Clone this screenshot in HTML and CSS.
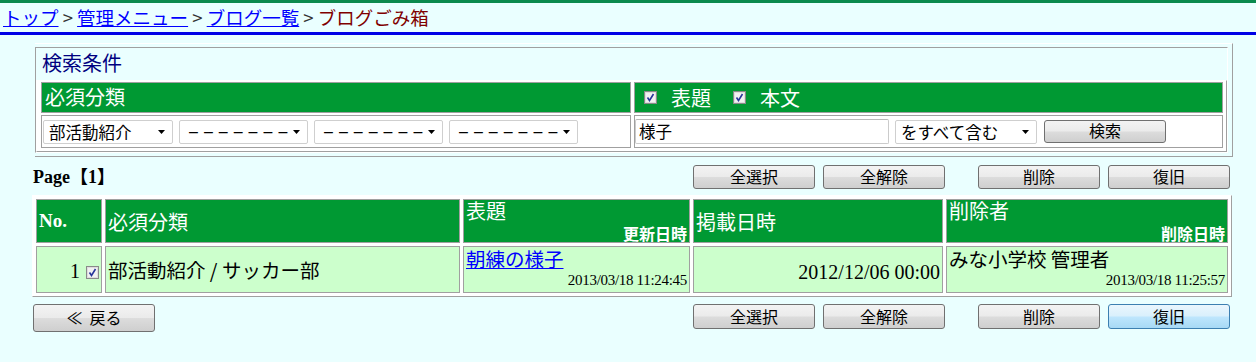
FILE: index.html
```html
<!DOCTYPE html>
<html lang="ja">
<head>
<meta charset="utf-8">
<title>ブログごみ箱</title>
<link rel="stylesheet" href="styles.css">
</head>
<body>
<div class="crumb"><a class="lnk" href="#">トップ</a><span class="sep"> &gt; </span><a class="lnk" href="#">管理メニュー</a><span class="sep"> &gt; </span><a class="lnk" href="#">ブログ一覧</a><span class="sep"> &gt; </span><span class="cur">ブログごみ箱</span></div>

<div class="search">
  <div class="search-cell">
    <div class="search-title">検索条件</div>
    <div class="search-grid">
      <div class="sg-head">必須分類</div>
      <div class="sg-head sg-checks">
        <span class="cb"><svg width="13" height="13" viewBox="0 0 13 13"><rect x="0.5" y="0.5" width="12" height="12" fill="#dedede" stroke="#8a8a8a"/><rect x="2" y="2" width="9" height="9" fill="#f2f2f2"/><path d="M3.5 6.5 L5.5 9.5 L9.5 3" fill="none" stroke="#27359a" stroke-width="1.6"/></svg></span>
        <span class="chk-label">表題</span>
        <span class="cb cb-second"><svg width="13" height="13" viewBox="0 0 13 13"><rect x="0.5" y="0.5" width="12" height="12" fill="#dedede" stroke="#8a8a8a"/><rect x="2" y="2" width="9" height="9" fill="#f2f2f2"/><path d="M3.5 6.5 L5.5 9.5 L9.5 3" fill="none" stroke="#27359a" stroke-width="1.6"/></svg></span>
        <span class="chk-label">本文</span>
      </div>
      <div class="sg-body sg-selects">
        <div class="sel sel-cat"><span class="sel-text">部活動紹介</span><svg class="arrow" width="7" height="4" viewBox="0 0 7 4"><path d="M0 0 H7 L3.5 4 Z" fill="#000"/></svg></div>
        <div class="sel sel-cat2"><span class="sel-text dash">–––––––</span><svg class="arrow" width="7" height="4" viewBox="0 0 7 4"><path d="M0 0 H7 L3.5 4 Z" fill="#000"/></svg></div>
        <div class="sel sel-cat2"><span class="sel-text dash">–––––––</span><svg class="arrow" width="7" height="4" viewBox="0 0 7 4"><path d="M0 0 H7 L3.5 4 Z" fill="#000"/></svg></div>
        <div class="sel sel-cat2"><span class="sel-text dash">–––––––</span><svg class="arrow" width="7" height="4" viewBox="0 0 7 4"><path d="M0 0 H7 L3.5 4 Z" fill="#000"/></svg></div>
      </div>
      <div class="sg-body sg-words">
        <div class="txt">様子</div>
        <div class="sel sel-mode"><span class="sel-text">をすべて含む</span><svg class="arrow" width="7" height="4" viewBox="0 0 7 4"><path d="M0 0 H7 L3.5 4 Z" fill="#000"/></svg></div>
        <div class="btn btn-search">検索</div>
      </div>
    </div>
  </div>
</div>

<div class="bar bar-top">
  <div class="page-label">Page【1】</div>
  <div class="btn">全選択</div>
  <div class="btn">全解除</div>
  <div class="btn btn-far">削除</div>
  <div class="btn">復旧</div>
</div>

<table class="list">
  <tr class="head-row">
    <th class="c-no">No.</th>
    <th class="c-cat">必須分類</th>
    <th class="c-title top"><div class="split"><span>表題</span><span class="sub">更新日時</span></div></th>
    <th class="c-date">掲載日時</th>
    <th class="c-del top"><div class="split"><span>削除者</span><span class="sub">削除日時</span></div></th>
  </tr>
  <tr class="data-row">
    <td class="d-no"><span class="num">1</span><span class="cb cb-row"><svg width="13" height="13" viewBox="0 0 13 13"><rect x="0.5" y="0.5" width="12" height="12" fill="#dedede" stroke="#8a8a8a"/><rect x="2" y="2" width="9" height="9" fill="#f2f2f2"/><path d="M3.5 6.5 L5.5 9.5 L9.5 3" fill="none" stroke="#27359a" stroke-width="1.6"/></svg></span></td>
    <td class="d-cat">部活動紹介 / サッカー部</td>
    <td class="top"><div class="split"><a class="lnk" href="#">朝練の様子</a><span class="stamp">2013/03/18 11:24:45</span></div></td>
    <td class="d-date">2012/12/06 00:00</td>
    <td class="top"><div class="split"><span>みな小学校 管理者</span><span class="stamp">2013/03/18 11:25:57</span></div></td>
  </tr>
</table>

<div class="bar bar-bottom">
  <div class="btn btn-back">≪&nbsp;&nbsp;戻る</div>
  <div class="spacer"></div>
  <div class="btn">全選択</div>
  <div class="btn">全解除</div>
  <div class="btn btn-far">削除</div>
  <div class="btn btn-blue">復旧</div>
</div>
</body>
</html>
```

FILE: styles.css
```css
* { box-sizing: border-box; }

body {
  margin: 0;
  background: #eaffff;
  font-family: "Noto Sans CJK JP", sans-serif;
  color: #000;
}

.lnk { color: #0000ff; text-decoration: underline; }

/* breadcrumb */
.crumb {
  height: 35px;
  border-top: 3px solid #0b8a4e;
  border-bottom: 3px solid #0000e6;
  padding-left: 3px;
  font-size: 18.5px;
  line-height: 28px;
  white-space: nowrap;
}
.crumb .sep { color: #333; }
.crumb .cur { color: #800000; }

/* search box */
.search {
  margin: 8px 0 0 35px;
  width: 1198px;
  border-top: 1px solid #ffffff;
  border-right: 1px solid #a0a0a0;
  border-bottom: 1px solid #a0a0a0;
  padding: 3px 4px 3px 0;
}
.search-cell {
  border: 1px solid;
  border-color: #a0a0a0 #ffffff #ffffff #a0a0a0;
}
.search-title {
  height: 32px;
  padding-left: 6px;
  font-size: 20px;
  line-height: 30px;
  color: #000080;
}
.search-grid {
  display: grid;
  grid-template-columns: 590px 1fr;
  column-gap: 3px;
  row-gap: 2px;
  padding: 1px 3px 3px 4px;
  border: 1px solid;
  border-color: #ffffff #a0a0a0 #a0a0a0 #ffffff;
  background: #fff;
}
.sg-head {
  height: 31px;
  background: #009933;
  border: 1px solid #a0a0a0;
  color: #fff;
  font-size: 20px;
  line-height: 28px;
  padding-left: 3px;
  white-space: nowrap;
}
.sg-checks {
  display: flex;
  align-items: center;
  padding-left: 9px;
}
.cb { display: inline-flex; width: 13px; height: 13px; }
.cb svg { display: block; }
.chk-label { margin-left: 14px; line-height: 28px; }
.cb-second { margin-left: 22px; }

.sg-body {
  height: 33px;
  border: 1px solid #a0a0a0;
  display: flex;
  align-items: center;
  white-space: nowrap;
}
.sg-selects { padding-left: 1px; gap: 6px; }
.sg-words { padding-left: 0; }

.sel {
  height: 24px;
  background: #fff;
  border: 1px solid #cfcfcf;
  border-radius: 2px;
  display: flex;
  align-items: center;
  padding: 0 7px 0 5px;
  font-size: 16.5px;
}
.sel-text { flex: 1; line-height: 22px; }
.dash {
  font-family: "Liberation Sans", sans-serif;
  font-size: 16px;
  letter-spacing: 6px;
  padding-left: 4px;
}
.arrow { display: block; flex: none; }
.sel-cat { width: 130px; }
.sel-cat2 { width: 129px; }
.sel-mode { width: 142px; margin-left: 6px; }

.txt {
  width: 254px;
  height: 25px;
  background: #fff;
  border: 1px solid #cbcbcb;
  border-top-color: #b9b9b9;
  border-radius: 2px;
  font-size: 16.5px;
  line-height: 23px;
  padding-left: 3px;
}

/* buttons */
.btn {
  width: 122px;
  height: 24px;
  margin-left: 8px;
  border: 1px solid #707070;
  border-radius: 3px;
  background: linear-gradient(#f3f3f3 0%, #ebebeb 48%, #dcdcdc 52%, #cfcfcf 100%);
  font-size: 16px;
  line-height: 21px;
  text-align: center;
  white-space: nowrap;
  flex: none;
}
.btn-far { margin-left: 33px; }
.btn-search { margin-left: 7px; height: 23px; line-height: 19px; }
.btn-blue {
  border-color: #3c7fb1;
  background: linear-gradient(#eaf6fd 0%, #d9f0fc 48%, #bee6fd 52%, #a7d9f5 100%);
}
.btn-back { margin-left: 0; height: 28px; line-height: 25px; }

/* rows of buttons */
.bar {
  display: flex;
  align-items: flex-start;
  margin-left: 33px;
  width: 1197px;
}
.bar-top { margin-top: 8px; height: 24px; align-items: center; }
.page-label {
  flex: 1;
  font-family: "Liberation Serif", "Noto Sans CJK JP", serif;
  font-weight: bold;
  font-size: 18px;
  line-height: 24px;
}
.bar-bottom { margin-top: 7px; }
.bar-bottom .btn { height: 25px; line-height: 22px; }
.bar-bottom .btn-back { height: 28px; line-height: 25px; }
.spacer { flex: 1; }

/* list table */
.list {
  margin: 6px 0 0 32px;
  width: 1200px;
  table-layout: fixed;
  border-collapse: separate;
  border-spacing: 3px;
  background: #fff;
  border: 1px solid;
  border-color: #ffffff #a0a0a0 #a0a0a0 #ffffff;
}
.list th, .list td {
  border: 1px solid #a0a0a0;
  padding: 0 2px;
  vertical-align: middle;
  text-align: left;
  white-space: nowrap;
}
.list th {
  height: 44px;
  background: #009933;
  color: #fff;
  font-weight: normal;
  font-size: 20px;
}
.list td {
  height: 47px;
  background: #ccffcc;
  font-size: 19.5px;
}
.c-no { width: 66px; font-family: "Liberation Serif", serif; font-weight: bold !important; font-size: 19px !important; }
.c-cat { width: 355px; }
.c-title { width: 227px; }
.c-date { width: 250px; }
.c-del { width: 282px; }

.list .top { vertical-align: top; }
.split {
  display: flex;
  flex-direction: column;
  justify-content: space-between;
  height: 42px;
}
.data-row .split { height: 44px; padding-top: 1px; padding-bottom: 3px; }
.split .sub {
  align-self: flex-end;
  font-size: 16px;
  font-weight: bold;
  line-height: 18px;
}
.split > span:first-child, .split > a { line-height: 22px; }
.stamp {
  align-self: flex-end;
  font-family: "Liberation Serif", serif;
  font-size: 15px;
  line-height: 16px;
  letter-spacing: -0.3px;
}

.d-no { text-align: right !important; }
.num { font-family: "Liberation Serif", serif; font-size: 20px; }
.cb-row { margin-left: 6px; vertical-align: -1px; }
.d-date {
  text-align: right !important;
  font-family: "Liberation Serif", serif;
  font-size: 20px !important;
  padding-top: 6px !important;
}
```
